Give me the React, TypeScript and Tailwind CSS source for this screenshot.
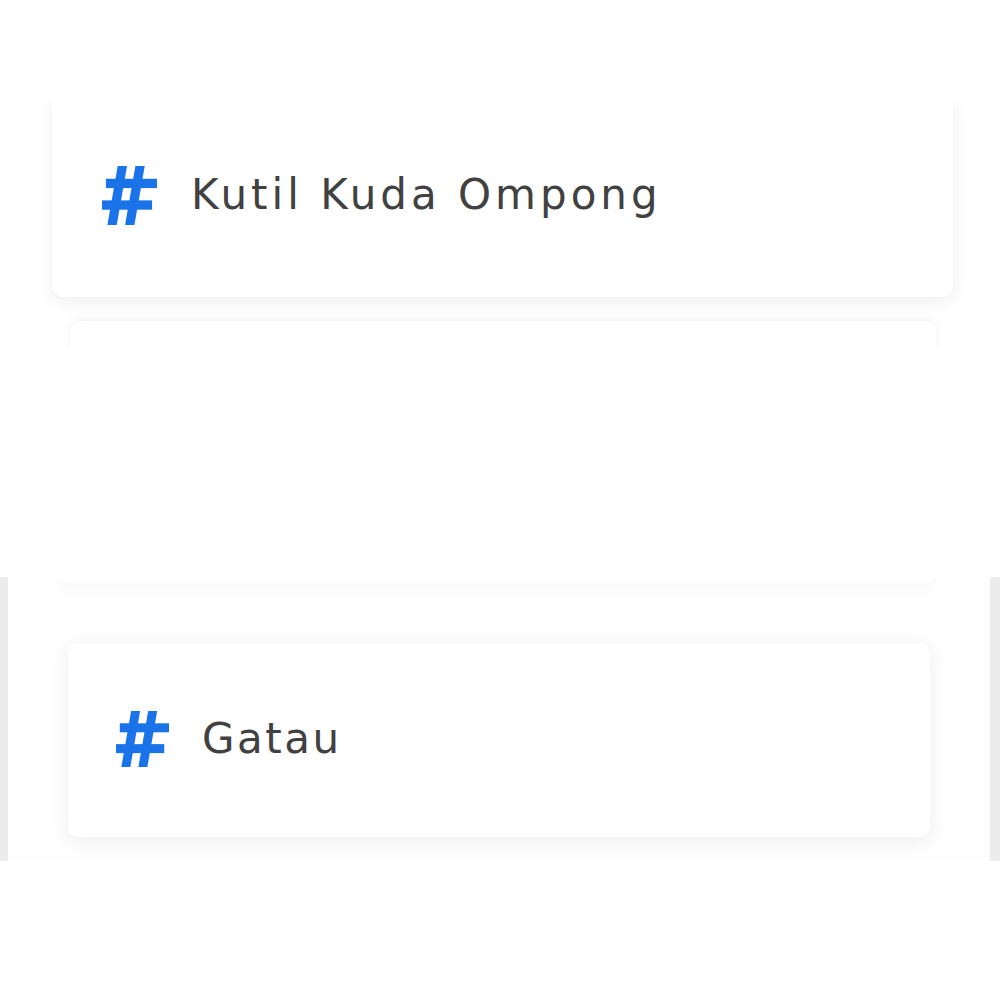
function Hash({ size }: { size: number }) {
  return (
    <svg
      width={size}
      height={(size * 60) / 56}
      viewBox="0 0 56 60"
      className="shrink-0 fill-[#1a73e8]"
    >
      <polygon points="16,0 25.5,0 15,60 5.5,60" />
      <polygon points="34,0 43.5,0 33,60 23.5,60" />
      <rect x="4" y="13" width="52" height="9.5" />
      <rect x="0" y="35" width="51" height="9.5" />
    </svg>
  );
}

function TagCard({
  label,
  iconSize,
  className,
  textClass,
}: {
  label: string;
  iconSize: number;
  className: string;
  textClass: string;
}) {
  return (
    <div
      className={`flex items-center bg-white shadow-[0_4px_18px_rgba(0,0,0,0.07)] ${className}`}
    >
      <Hash size={iconSize} />
      <span
        className={`text-[#414141] text-[42px] leading-none font-normal font-['DejaVu_Sans',sans-serif] ${textClass}`}
      >
        {label}
      </span>
    </div>
  );
}

export default function App() {
  return (
    <div className="w-[1000px] h-[1000px] bg-white overflow-hidden flex flex-col">
      <div className="h-[100px] shrink-0" />

      {/* first screenshot */}
      <div className="h-[250px] shrink-0 overflow-hidden flex flex-col">
        <TagCard
          label="Kutil Kuda Ompong"
          iconSize={55}
          textClass="ml-[34px] tracking-[4px]"
          className="ml-[52px] w-[901px] h-[202px] rounded-b-[12px] pl-[50px] pb-[6px]"
        />
        <div className="mt-[24px] ml-[70px] w-[866px] h-[30px] rounded-t-[10px] bg-white shadow-[0_-2px_10px_rgba(0,0,0,0.05)]" />
      </div>

      <div className="h-[227px] shrink-0" />

      {/* second screenshot */}
      <div className="h-[284px] shrink-0 flex bg-[#fefefe]">
        <div className="w-[8px] bg-[#ececec]" />
        <div className="flex-1 flex flex-col overflow-hidden">
          <div className="ml-[54px] w-[870px] h-[6px] rounded-b-[10px] bg-white shadow-[0_4px_14px_rgba(0,0,0,0.06)]" />
          <TagCard
            label="Gatau"
            iconSize={53}
            textClass="ml-[33px] tracking-[2.5px]"
            className="mt-[60px] ml-[60px] w-[862px] h-[194px] rounded-[10px] pl-[48px] pb-[2px]"
          />
        </div>
        <div className="w-[10px] bg-[#ececec]" />
      </div>
    </div>
  );
}
